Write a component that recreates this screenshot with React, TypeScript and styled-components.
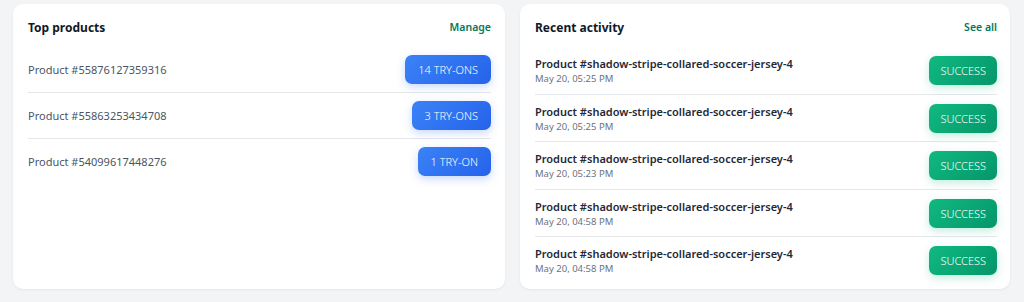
import React from 'react';
import styled, { createGlobalStyle } from 'styled-components';

const GlobalStyle = createGlobalStyle`
  html, body {
    margin: 0;
    padding: 0;
    background: #f3f4f6;
    font-family: 'Noto Sans', 'Open Sans', sans-serif;
  }
`;

const Page = styled.div`
  display: grid;
  grid-template-columns: 492px 490px;
  gap: 15px;
  padding: 4px 14px 0 13px;
  box-sizing: border-box;
  width: 1024px;
  height: 302px;
`;

const Card = styled.section<{ $padRight?: number }>`
  background: #ffffff;
  border-radius: 10px;
  box-shadow: 0 1px 3px rgba(15, 23, 42, 0.06);
  padding: 16px ${(p) => p.$padRight ?? 14}px 5px 15px;
  box-sizing: border-box;
  height: 285px;
  display: flex;
  flex-direction: column;
`;

const CardHeader = styled.header`
  display: flex;
  justify-content: space-between;
  align-items: center;
  height: 14px;
  margin: 0 0 13px;
`;

const Title = styled.h2`
  margin: 0;
  font-size: 12px;
  font-weight: 700;
  color: #111827;
`;

const HeaderLink = styled.a`
  font-size: 10.5px;
  font-weight: 600;
  color: #047857;
  text-decoration: none;
  cursor: pointer;
`;

const List = styled.ul`
  list-style: none;
  margin: 0;
  padding: 0;
`;

const Row = styled.li<{ $tall?: boolean }>`
  display: flex;
  align-items: center;
  justify-content: space-between;
  padding: ${(p) => (p.$tall ? '9px 0 8.5px' : '8px 0')};
  border-bottom: 1px solid #e5e7eb;

  &:last-child {
    border-bottom: none;
  }
`;

const ProductName = styled.span`
  font-size: 11px;
  color: #4b5563;
`;

const ActivityText = styled.div`
  display: flex;
  flex-direction: column;
`;

const ActivityTitle = styled.span`
  font-size: 11px;
  font-weight: 600;
  color: #1f2937;
  line-height: 16px;
`;

const ActivityDate = styled.span`
  font-size: 9.5px;
  color: #6b7280;
  line-height: 13px;
`;

const Pill = styled.span<{ $tone: 'blue' | 'green' }>`
  display: inline-flex;
  align-items: center;
  justify-content: center;
  height: 29px;
  padding: 0 ${(p) => (p.$tone === 'blue' ? '13px' : '11px')};
  border-radius: 7px;
  font-size: 11px;
  font-weight: 300;
  color: #ffffff;
  box-sizing: border-box;
  background: ${(p) =>
    p.$tone === 'blue'
      ? 'linear-gradient(135deg, #3b82f6 0%, #2563eb 100%)'
      : 'linear-gradient(135deg, #10b981 0%, #059669 100%)'};
  box-shadow: ${(p) =>
    p.$tone === 'blue'
      ? '0 3px 8px rgba(37, 99, 235, 0.25)'
      : '0 3px 8px rgba(16, 185, 129, 0.25)'};
`;

const products = [
  { id: '55876127359316', count: '14 TRY-ONS' },
  { id: '55863253434708', count: '3 TRY-ONS' },
  { id: '54099617448276', count: '1 TRY-ON' },
];

const activity = [
  'May 20, 05:25 PM',
  'May 20, 05:25 PM',
  'May 20, 05:23 PM',
  'May 20, 04:58 PM',
  'May 20, 04:58 PM',
];

const App: React.FC = () => {
  return (
    <>
      <GlobalStyle />
      <Page>
        <Card>
          <CardHeader>
            <Title>Top products</Title>
            <HeaderLink>Manage</HeaderLink>
          </CardHeader>
          <List>
            {products.map((p) => (
              <Row key={p.id}>
                <ProductName>Product #{p.id}</ProductName>
                <Pill $tone="blue">{p.count}</Pill>
              </Row>
            ))}
          </List>
        </Card>
        <Card $padRight={13}>
          <CardHeader>
            <Title>Recent activity</Title>
            <HeaderLink>See all</HeaderLink>
          </CardHeader>
          <List>
            {activity.map((date, i) => (
              <Row key={i} $tall>
                <ActivityText>
                  <ActivityTitle>Product #shadow-stripe-collared-soccer-jersey-4</ActivityTitle>
                  <ActivityDate>{date}</ActivityDate>
                </ActivityText>
                <Pill $tone="green">SUCCESS</Pill>
              </Row>
            ))}
          </List>
        </Card>
      </Page>
    </>
  );
};

export default App;
